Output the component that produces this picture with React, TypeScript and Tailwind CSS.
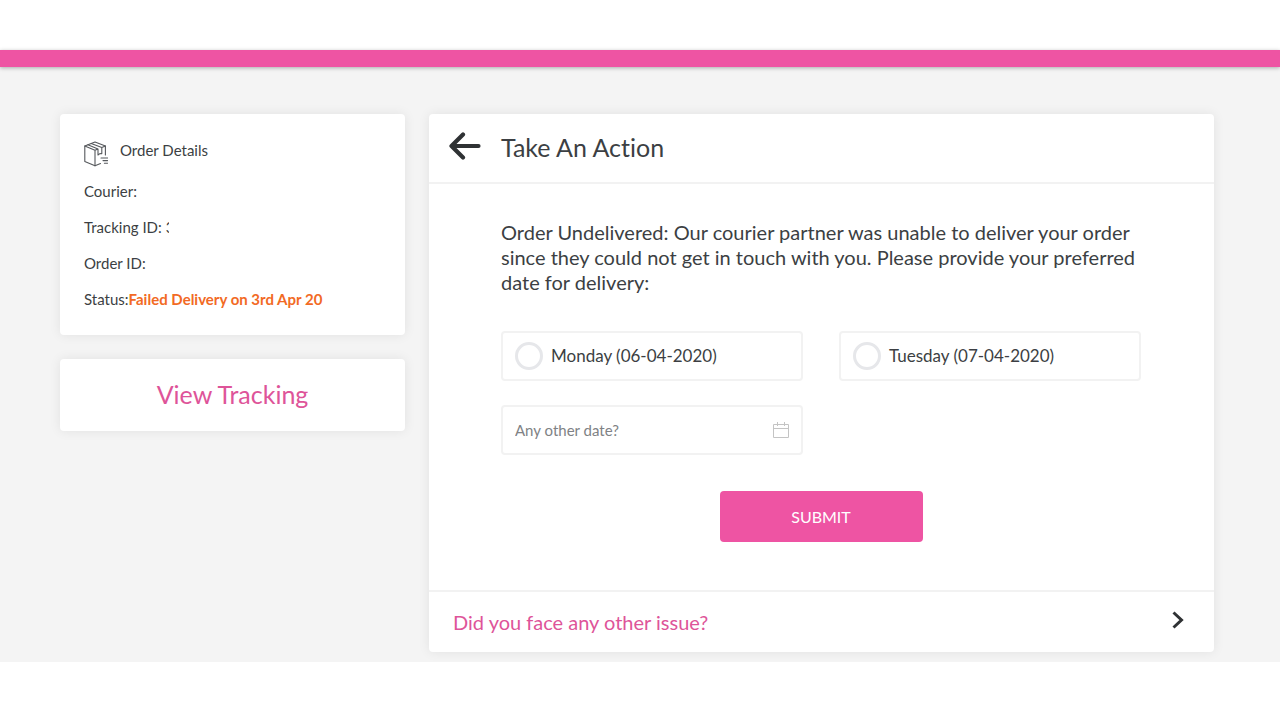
import React from "react";

const font = "font-['Lato','Noto_Sans',sans-serif]";
const card = "rounded bg-white shadow-[0_0_12px_rgba(0,0,0,0.08)]";
const field = "flex h-[50px] items-center rounded border-2 border-[#f2f2f2] px-3";

function PackageIcon() {
  return (
    <svg
      viewBox="0 0 24 26"
      className="mt-[5px] h-[26px] w-6 shrink-0"
      fill="none"
      stroke="#55585c"
      strokeWidth="1.1"
      strokeLinejoin="round"
      strokeLinecap="round"
      aria-hidden="true"
    >
      <path d="M16.5 22.6 11 24.8 0.8 20.6V5L11 1l10.4 4v9" />
      <path d="M0.8 5 11 9.2 14 8M17.8 6.5 21.4 5M11 9.2v15.6M3.9 3.8 14 8v6l1.9-1.4 1.9 0.2V6.5L7.2 2.5" />
      <path d="M17 17h6.6M19 19.6h4.6M20.4 22.2h3.2" />
    </svg>
  );
}

function BackIcon() {
  return (
    <svg
      viewBox="0 0 32 28"
      className="h-7 w-8"
      fill="none"
      stroke="#2f3234"
      strokeWidth="4.2"
      strokeLinejoin="round"
      strokeLinecap="round"
      aria-hidden="true"
    >
      <path d="M14 2.6 2.5 14 14 25.4M3 14h26.5" />
    </svg>
  );
}

function CalendarIcon() {
  return (
    <svg viewBox="0 0 16 16" className="h-4 w-4" fill="none" stroke="#c4c4c4" aria-hidden="true">
      <path d="M0.5 2.5h15v13h-15zM0.5 6.5h15M4.5 0v4M11.5 0v4" />
    </svg>
  );
}

function ChevronIcon() {
  return (
    <svg viewBox="0 0 12 18" className="h-[18px] w-3" fill="none" stroke="#2f3234" strokeWidth="3" aria-hidden="true">
      <path d="M1.5 1.5 9.5 9l-8 7.5" />
    </svg>
  );
}

function DateOption({ id, label }: { id: string; label: string }) {
  return (
    <label htmlFor={id} className={`${field} cursor-pointer gap-2 text-[17px] text-[#3c3f43]`}>
      <input
        id={id}
        type="radio"
        name="delivery-date"
        className="h-7 w-7 shrink-0 appearance-none rounded-full border-[3px] border-[#e6e7ea] bg-white checked:bg-[#ee54a3]"
      />
      {label}
    </label>
  );
}

export default function App() {
  return (
    <div className={`${font} bg-white text-[#3c3f43]`}>
      <header className="relative mt-[50px] h-[17px] bg-[#ee54a3] shadow-[0_1px_4px_rgba(0,0,0,0.3)]" />
      <main className="grid grid-cols-[345fr_785fr] items-start gap-6 overflow-hidden bg-[#f4f4f4] pt-[47px] pr-[66px] pb-[10px] pl-[60px]">
        <aside className="flex flex-col gap-6">
          <section className={`${card} px-6 pt-[22px] pb-[18px] text-[15px] leading-9`}>
            <div className="flex h-[37px] items-start gap-3">
              <PackageIcon />
              <h2 className="leading-7">Order Details</h2>
            </div>
            <p>Courier:</p>
            <p className="flex">
              Tracking ID:
              <span className="ml-1 w-[3px] overflow-hidden">3</span>
            </p>
            <p>Order ID:</p>
            <p>
              Status:<strong className="font-bold text-[#f26a24]">Failed Delivery on 3rd Apr 20</strong>
            </p>
          </section>
          <button type="button" className={`${card} h-[72px] text-[25px] text-[#de5499]`}>
            View Tracking
          </button>
        </aside>

        <section className={card}>
          <div className="flex h-[70px] items-center border-b-2 border-[#f2f2f2] pl-5">
            <button type="button" aria-label="Back" className="mr-5 pb-1">
              <BackIcon />
            </button>
            <h1 className="text-[25px] text-[#3c3f43] [font-variant-ligatures:none]">Take An Action</h1>
          </div>
          <form className="pt-9 pr-[73px] pb-12 pl-[72px]" onSubmit={(e) => e.preventDefault()}>
            <p className="text-xl leading-[25px]">
              Order Undelivered: Our courier partner was unable to deliver your order since they could not get in touch
              with you. Please provide your preferred date for delivery:
            </p>
            <div className="mt-9 grid grid-cols-2 gap-x-9 gap-y-6">
              <DateOption id="monday" label="Monday (06-04-2020)" />
              <DateOption id="tuesday" label="Tuesday (07-04-2020)" />
              <label htmlFor="other-date" className={field}>
                <input
                  id="other-date"
                  type="text"
                  aria-label="Any other date"
                  placeholder="Any other date?"
                  className="min-w-0 flex-1 bg-transparent text-[15px] outline-none placeholder:text-[#808285]"
                />
                <CalendarIcon />
              </label>
            </div>
            <div className="mt-9 flex justify-center">
              <button type="submit" className="h-[51px] w-[203px] rounded bg-[#ee54a3] text-base text-white">
                SUBMIT
              </button>
            </div>
          </form>
          <a
            href="#other-issue"
            className="flex h-[62px] items-center justify-between border-t-2 border-[#f2f2f2] pr-[30px] pl-6 text-xl text-[#de5499]"
          >
            Did you face any other issue?
            <span className="pb-1">
              <ChevronIcon />
            </span>
          </a>
        </section>
      </main>
    </div>
  );
}
